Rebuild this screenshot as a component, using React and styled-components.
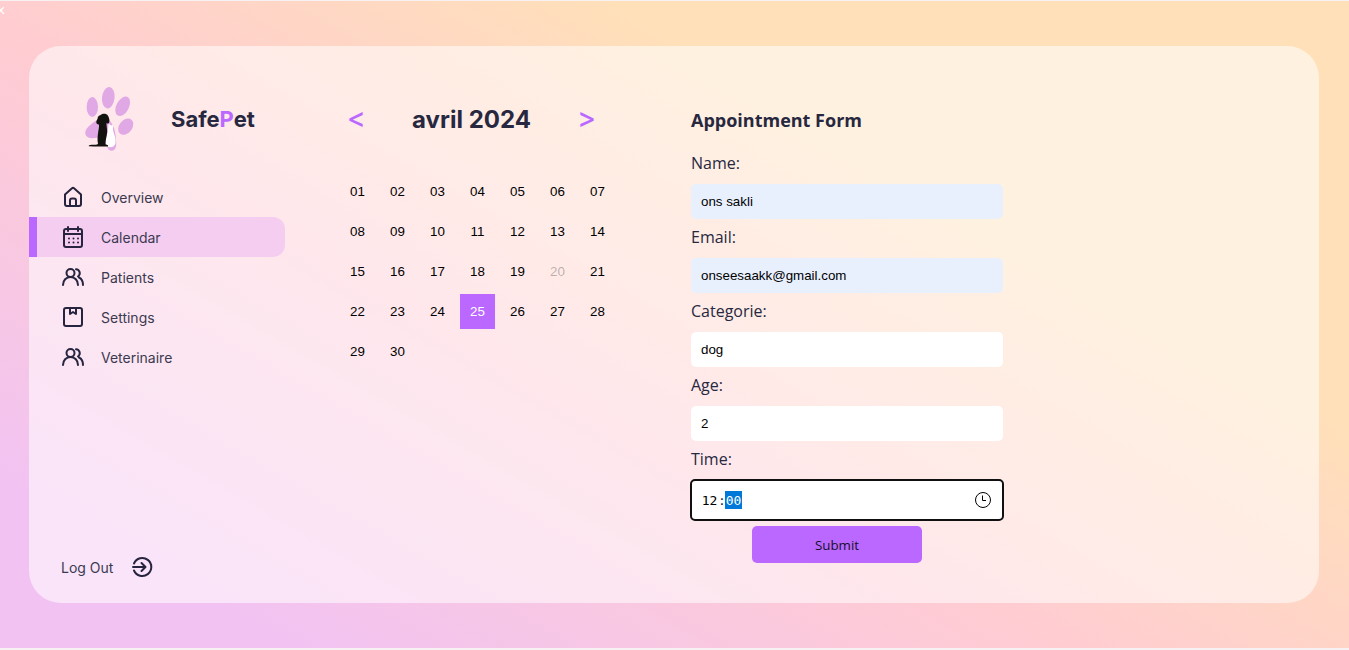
import React, { useState } from "react";
import styled, { createGlobalStyle } from "styled-components";

const GlobalStyle = createGlobalStyle`
  * { box-sizing: border-box; }
  body { margin: 0; background: #f7f1f3; font-family: Inter, sans-serif; color: #27283f; }
`;

const Page = styled.div`
  position: relative;
  overflow: hidden;
  min-height: calc(100vh - 3px);
  margin: 1px 0 2px;
  padding: 45px 30px 45px 29px;
  display: flex;
  background: linear-gradient(30deg, #f2c3f2 12%, #ffccd2 43%, #ffe0b9 70%);
`;

const CloseButton = styled.button`
  position: absolute;
  top: 2px;
  left: -4px;
  border: 0;
  padding: 0;
  background: none;
  color: #fff;
  font: 16px/16px "Liberation Sans", sans-serif;
`;

const Panel = styled.main`
  flex: 1;
  display: flex;
  border-radius: 32px;
  background: rgba(255, 255, 255, 0.55);
`;

const Sidebar = styled.aside`
  width: 256px;
  flex: none;
  display: flex;
  flex-direction: column;
  padding: 36px 0 16px;
`;

const Brand = styled.div`
  display: flex;
  align-items: center;
  gap: 32px;
  height: 76px;
  padding-left: 52px;
`;

const BrandName = styled.h1`
  margin: 0;
  font-size: 22px;
  line-height: 30px;
  padding-bottom: 2px;
  font-weight: 700;
  span { color: #ba68ff; }
`;

const Nav = styled.nav`
  display: flex;
  flex-direction: column;
  margin-top: 19px;
`;

const NavLink = styled.a`
  display: flex;
  align-items: center;
  gap: 16px;
  height: 40px;
  padding-left: ${(p) => (p.$active ? "24px" : "32px")};
  border-left: ${(p) => (p.$active ? "8px solid #ba68ff" : "0")};
  border-radius: 0 12px 12px 0;
  background: ${(p) => (p.$active ? "#f5cdf1" : "transparent")};
  color: #3b3a50;
  font-size: 14px;
  text-decoration: none;
  svg { color: #27243f; flex: none; }
`;

const LogOut = styled(NavLink)`
  margin-top: auto;
`;

const Calendar = styled.section`
  width: 275px;
  flex: none;
  margin: 53px 0 0 55px;
`;

const MonthBar = styled.div`
  display: flex;
  align-items: center;
  justify-content: space-between;
  height: 40px;
  padding: 0 19px 0 7px;
`;

const MonthTitle = styled.h2`
  margin: 0;
  font-size: 24px;
  font-weight: 700;
`;

const Arrow = styled.button`
  border: 0;
  padding: 0 0 2px;
  background: none;
  color: #ba68ff;
  font: 500 28px Inter, sans-serif;
`;

const Days = styled.div`
  display: grid;
  grid-template-columns: repeat(7, 1fr);
  gap: 5px;
  margin-top: 35px;
`;

const Day = styled.button`
  height: 35px;
  border: 0;
  padding: 0;
  background: ${(p) => (p.$selected ? "#ba68ff" : "transparent")};
  color: ${(p) => (p.$selected ? "#fff" : "#000")};
  font-family: "Liberation Sans", Arial, sans-serif;
  &:disabled { color: rgba(16, 16, 16, 0.3); }
`;

const Form = styled.form`
  width: 312px;
  margin: 61px 0 0 76px;
  display: flex;
  flex-direction: column;
  font-family: "Comic Sans MS", "Open Sans", sans-serif;
`;

const FormTitle = styled.h3`
  margin: 0 0 18px;
  font-size: 18px;
  line-height: 26px;
`;

const Label = styled.label`
  font-size: 16px;
  line-height: 24px;
  margin-bottom: 9px;
`;

const Input = styled.input`
  height: 35px;
  width: 100%;
  margin-bottom: 6px;
  padding: 0 10px;
  border: 0;
  border-radius: 5px;
  background: ${(p) => (p.$filled ? "#e8f0fe" : "#fff")};
  color: #000;
  font-family: "Liberation Sans", Arial, sans-serif;
`;

const Submit = styled.button`
  align-self: center;
  width: 170px;
  height: 37px;
  margin-right: 20px;
  border: 0;
  border-radius: 5px;
  background: #ba68ff;
  color: #17102a;
  font-family: "Comic Sans MS", "Open Sans", sans-serif;
`;

const TimeBox = styled.div`
  display: flex;
  align-items: center;
  height: 42px;
  margin: -1px -1px 5px;
  padding: 0 10px 0 9px;
  border: 2px solid #101010;
  border-radius: 5px;
  background: #fff;
  svg { margin-left: auto; }
`;

const TimePart = styled.input`
  width: 17px;
  height: 18px;
  padding: 0;
  border: 0;
  outline: 0;
  text-align: center;
  background: ${(p) => (p.$active ? "#0078d7" : "transparent")};
  color: ${(p) => (p.$active ? "#fff" : "#000")};
  font: 13px "DejaVu Sans Mono", monospace;
`;

const Colon = styled.span`
  width: 7px;
  font: 13px "DejaVu Sans Mono", monospace;
  text-align: center;
`;

const Icon = ({ children }) => (
  <svg width="24" height="24" viewBox="0 0 24 24" fill="none" stroke="currentColor" strokeWidth="2" strokeLinecap="round" strokeLinejoin="round" aria-hidden="true">{children}</svg>
);
const House = () => (
  <Icon><path d="M4 9.500 11 3.300q1-.9 2 0L20 9.500V19q0 2-2 2H6q-2 0-2-2ZM9 21v-5.500q0-2 2-2h2q2 0 2 2V21" /></Icon>
);
const CalendarIcon = () => (
  <Icon>
    <rect x="3" y="4" width="18" height="18" rx="2" />
    <path d="M7 2v4M17 2v4M3 9h18" />
    <path d="M8 13.500h.01M12.500 13.500h.01M17 13.500h.01M8 17.500h.01M12.500 17.500h.01M17 17.500h.01" />
  </Icon>
);
const People = () => (
  <Icon>
    <circle cx="9.500" cy="8" r="4" />
    <path d="M2 20c0-4.600 3.200-8 7.500-8s7.500 3.400 7.500 8M15 4.200a4 4 0 0 1 2 7.300M18 12.500c2.600 1.200 4 4 4 7.500" />
  </Icon>
);
const Box = () => (
  <Icon><rect x="3" y="3" width="18" height="18" rx="2" /><path d="M9 3v6l3-2 3 2V3" /></Icon>
);
const Exit = () => (
  <Icon><path d="M5 8.500a9 9 0 1 1 0 7M4 12h12M12.500 8l4 4-4 4" /></Icon>
);
const Clock = () => (
  <svg width="18" height="18" viewBox="0 0 18 18" fill="none" stroke="#000" aria-hidden="true">
    <circle cx="9" cy="9" r="7.500" /><path d="M8.500 4.500v5H12" />
  </svg>
);
const Logo = () => (
  <svg width="58" height="72" viewBox="0 0 58 72" aria-hidden="true">
    <g fill="#e0a8e4">
      <ellipse cx="11.300" cy="23" rx="5.700" ry="10" />
      <ellipse cx="27.300" cy="13.700" rx="6.300" ry="10.800" transform="rotate(6 27.300 13.700)" />
      <ellipse cx="41.700" cy="22.300" rx="6.300" ry="10.500" transform="rotate(28 41.700 22.300)" />
      <ellipse cx="44.700" cy="42.700" rx="6.500" ry="9" transform="rotate(38 44.700 42.700)" />
      <path d="M17 35C12 39 5 43 4.300 48c-.5 4 3 6.500 7 6.200l7-.7L26 62c.5 3 2.500 5 5 4.800 3-.3 4.500-4 4.200-8C35 49 33 40 27 35Z" />
    </g>
    <path d="M27.500 39.500 30 41.500l2-.5c0 3-.3 4 .5 7 1.200 4 2.500 6.500 2 11-.4 3-3 4.500-6 4.200-2.500-.2-4-1.700-4-5 .2-6 2.500-9 2.500-12Z" fill="#fff" />
    <path d="M19 31.500c2-2.300 6.500-2.300 8 .3 1 1.800 1.900 4.500 1.200 6.500-.5 1.700-2 1.600-2.600.4-.4 3 .8 6 .5 9.500-.2 4-1.700 8-1.600 12l2.500 1v1.300H13l-5-.3c-1-.8.8-1.600 3-1.500 2 0 4 .2 6-.8-.8-4-.4-8 .2-12 .3-2.500 1-4.500.8-7.500-1.300 0-2.400-.4-2.700-2-.3-1.500 1-2.500 1.300-4 .2-1.200.6-2 1.500-2.900Z" fill="#12130f" />
  </svg>
);

const links = [
  ["Overview", House],
  ["Calendar", CalendarIcon],
  ["Patients", People],
  ["Settings", Box],
  ["Veterinaire", People],
];

export default function App() {
  const [day, setDay] = useState(25);
  return (
    <>
      <GlobalStyle />
      <Page>
        <CloseButton>×</CloseButton>
        <Panel>
          <Sidebar>
            <Brand>
              <Logo />
              <BrandName>Safe<span>P</span>et</BrandName>
            </Brand>
            <Nav>
              {links.map(([name, Glyph]) => (
                <NavLink key={name} href="#" $active={name === "Calendar"}><Glyph />{name}</NavLink>
              ))}
            </Nav>
            <LogOut href="#">Log Out<Exit /></LogOut>
          </Sidebar>
          <Calendar>
            <MonthBar>
              <Arrow>&lt;</Arrow>
              <MonthTitle>avril 2024</MonthTitle>
              <Arrow>&gt;</Arrow>
            </MonthBar>
            <Days>
              {Array.from({ length: 30 }, (_, i) => i + 1).map((n) => (
                <Day key={n} $selected={n === day} disabled={n === 20} onClick={() => setDay(n)}>
                  {String(n).padStart(2, "0")}
                </Day>
              ))}
            </Days>
          </Calendar>
          <Form onSubmit={(e) => e.preventDefault()}>
            <FormTitle>Appointment Form</FormTitle>
            <Label htmlFor="name">Name:</Label>
            <Input id="name" $filled defaultValue="ons sakli" />
            <Label htmlFor="email">Email:</Label>
            <Input id="email" type="email" $filled defaultValue="onseesaakk@gmail.com" />
            <Label htmlFor="category">Categorie:</Label>
            <Input id="category" defaultValue="dog" />
            <Label htmlFor="age">Age:</Label>
            <Input id="age" defaultValue="2" />
            <Label htmlFor="hours">Time:</Label>
            <TimeBox>
              <TimePart id="hours" defaultValue="12" />
              <Colon>:</Colon>
              <TimePart aria-label="Minutes" $active defaultValue="00" />
              <Clock />
            </TimeBox>
            <Submit>Submit</Submit>
          </Form>
        </Panel>
      </Page>
    </>
  );
}
